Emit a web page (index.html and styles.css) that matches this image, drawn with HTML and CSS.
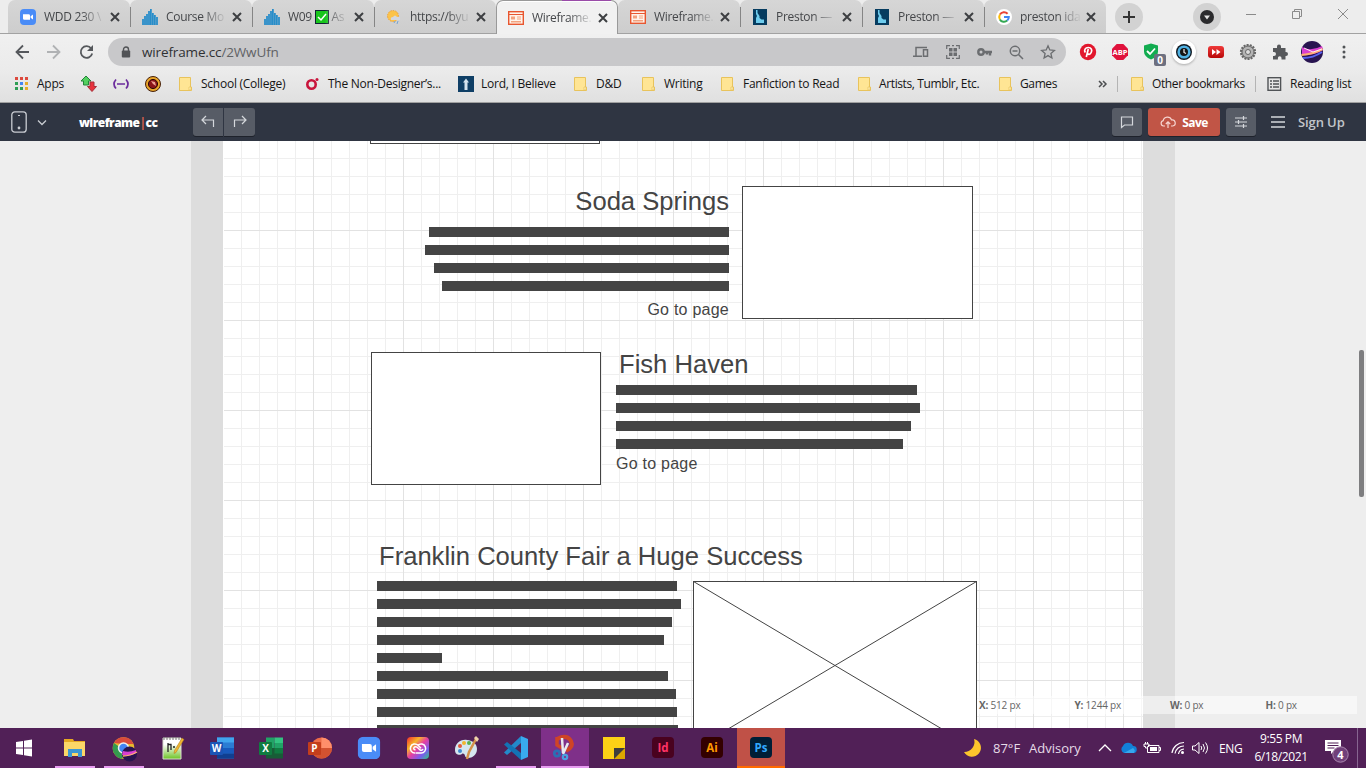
FILE: index.html
```html
<!DOCTYPE html>
<html lang="en">
<head>
<meta charset="utf-8">
<title>Wireframe</title>
<link rel="stylesheet" href="styles.css">
</head>
<body>
<svg class="defs" width="0" height="0">
  <defs>
    <linearGradient id="gfire" x1="0" y1="0" x2="1" y2="1"><stop offset="0" stop-color="#2a1a66"/><stop offset=".35" stop-color="#b03bd0"/><stop offset=".5" stop-color="#fff0d8"/><stop offset=".6" stop-color="#f0703a"/><stop offset=".75" stop-color="#5a2ab0"/><stop offset="1" stop-color="#140c3c"/></linearGradient>
    <linearGradient id="gcc" x1="0" y1="0" x2="1" y2="1"><stop offset="0" stop-color="#f22b2b"/><stop offset=".3" stop-color="#f5b52a"/><stop offset=".5" stop-color="#e83fa0"/><stop offset=".75" stop-color="#7a5af0"/><stop offset="1" stop-color="#2ad07a"/></linearGradient>
    <linearGradient id="gnp" x1="0" y1="0" x2="0" y2="1"><stop offset=".3" stop-color="#fff"/><stop offset="1" stop-color="#6cc424"/></linearGradient>
    <linearGradient id="gred" x1="0" y1="0" x2="0" y2="1"><stop offset="0" stop-color="#f03a3a"/><stop offset="1" stop-color="#b80808"/></linearGradient>
  </defs>
  <symbol id="x" viewBox="0 0 10 10"><path d="M1 1l8 8M9 1L1 9" stroke="currentColor" stroke-width="2" fill="none"/></symbol>
  <symbol id="zoom" viewBox="0 0 16 16"><rect width="16" height="16" rx="4" fill="#4a8cf7"/><path d="M3 5.200h5.600q1.400 0 1.400 1.400v4.200H4.400Q3 10.800 3 9.400zM10.600 7.200L13 5.400v5.200l-2.400-1.800z" fill="#fff"/></symbol>
  <symbol id="bars" viewBox="0 0 16 16"><path d="M1 16V10M3 16V7M5 16V5M7 16V2M8.900 16V0M10.900 16V4M12.900 16V6M15 16V8" stroke="#1585c8" stroke-width="1.600"/></symbol>
  <symbol id="wf" viewBox="0 0 16 14"><rect x=".7" y=".7" width="14.600" height="12.600" fill="#fff3ea" stroke="#e8562f" stroke-width="1.400"/><path d="M1 3.500h14" stroke="#e8562f"/><path d="M3 5.500h4v3H3zM3 10h10v1.500H3z" fill="#f3a27e"/><path d="M9 6h4M9 8h4" stroke="#f3a27e"/></symbol>
  <symbol id="idaho" viewBox="0 0 14 16"><rect width="14" height="16" fill="#063c60"/><path d="M3 1h1.500v3l2 3v2l2 1.500H11v3.500H3V9l1-2-1-2z" fill="#6fcdee"/></symbol>
  <symbol id="folder" viewBox="0 0 16 16"><path d="M1.500 1.500h11v9.500h1v3.500h-12z" fill="#ffe594" stroke="#e8c35c"/><path d="M11 14v-3h2v3z" fill="#fff0b8" stroke="#e8c35c" stroke-width=".7"/></symbol>
</svg>

<header class="tabs">
  <div class="tab"><svg class="fav"><use href="#zoom"/></svg><span class="title">WDD 230 \</span><svg class="close"><use href="#x"/></svg></div>
  <div class="tab sep"><svg class="fav"><use href="#bars"/></svg><span class="title">Course Mo</span><svg class="close"><use href="#x"/></svg></div>
  <div class="tab sep"><svg class="fav"><use href="#bars"/></svg><span class="title">W09 <svg class="check" viewBox="0 0 14 14"><rect x=".5" y=".5" width="13" height="13" fill="#18c51c" stroke="#123"/><path d="M3 7l3 3 5-6" fill="none" stroke="#fff" stroke-width="1.500"/></svg> As</span><svg class="close"><use href="#x"/></svg></div>
  <div class="tab sep"><svg class="fav" viewBox="0 0 16 16"><circle cx="7" cy="7" r="5.500" fill="#fcc34a" stroke="#eda23a" stroke-dasharray="1.500 1"/><path d="M5 11q-1-3 2-3 2-3 4 0 4-1 3 3z" fill="#d4d7df"/><path d="M9 12l-1 2M12 12l-1 3" stroke="#74a5d4"/></svg><span class="title">https://byu</span><svg class="close"><use href="#x"/></svg></div>
  <div class="tab active"><svg class="fav"><use href="#wf"/></svg><span class="title">Wireframe.</span><svg class="close"><use href="#x"/></svg></div>
  <div class="tab"><svg class="fav"><use href="#wf"/></svg><span class="title">Wireframe.</span><svg class="close"><use href="#x"/></svg></div>
  <div class="tab sep"><svg class="fav"><use href="#idaho"/></svg><span class="title">Preston —</span><svg class="close"><use href="#x"/></svg></div>
  <div class="tab sep"><svg class="fav"><use href="#idaho"/></svg><span class="title">Preston —</span><svg class="close"><use href="#x"/></svg></div>
  <div class="tab sep"><svg class="fav" viewBox="0 0 16 16"><circle cx="8" cy="8" r="8" fill="#fff"/><g fill="none" stroke-width="2"><path d="M11.600 4.700A4.800 4.800 0 0 0 3.900 5.600" stroke="#ea4335"/><path d="M3.900 5.600a4.800 4.800 0 0 0 0 4.800" stroke="#fbbc05"/><path d="M3.900 10.400a4.800 4.800 0 0 0 7.300 1.200" stroke="#34a853"/><path d="M11.200 11.600A4.800 4.800 0 0 0 12.800 8H8" stroke="#4285f4"/></g></svg><span class="title">preston ida</span><svg class="close"><use href="#x"/></svg></div>
  <div class="round plus"><svg width="12" height="12" viewBox="0 0 12 12"><path d="M6 0v12M0 6h12" stroke="#333" stroke-width="2"/></svg></div>
  <div class="round search"><svg width="14" height="14" viewBox="0 0 14 14"><circle cx="7" cy="7" r="7" fill="#2b2b2d"/><path d="M4 5.500h6L7 9.500z" fill="#e4e4e4"/></svg></div>
  <svg class="winctl" viewBox="0 0 104 12"><g fill="none" stroke="#8a8a8a"><path d="M0 6.500h10M46.500 3.500h7v7h-7zM48.500 3V1.500h7v7H54M92 1l10 10M102 1L92 11"/></g></svg>
</header>

<nav class="addressbar">
  <svg class="navs" viewBox="0 0 80 16"><g fill="none" stroke-width="1.800"><path d="M15 8H2.500M9 1.500L2.500 8 9 14.500" stroke="#55585c"/><path d="M33 8h12.500M39 1.500L45.500 8 39 14.500" stroke="#b0b2b4"/><path d="M77.200 4.500A5.800 5.800 0 1 0 78.200 9.500" stroke="#55585c"/></g><path d="M79 1v6h-6z" fill="#55585c"/></svg>
  <div class="url">
    <svg width="10" height="12" viewBox="0 0 10 12"><path d="M2.500 5V3.500a2.500 2.500 0 0 1 5 0V5" fill="none" stroke="#515356" stroke-width="1.400"/><rect x=".8" y="4.500" width="8.400" height="7" rx="1" fill="#515356"/></svg>
    <span class="host">wireframe.cc<i>/2WwUfn</i></span>
    <svg class="urlicons" viewBox="0 0 144 16"><g fill="none" stroke="#6b6d70" stroke-width="1.500"><path d="M14 3.500H3v8M0 12.300h9M10.500 5.700h4v6.600h-4z"/><path d="M33.700 5V1.700H37M43 1.700h3.300V5M46.300 11v3.300H43M37 14.300h-3.300V11M39 1.700h2M39 14.300h2" stroke-width="1.200"/><circle cx="68" cy="8" r="2.700" stroke-width="2.400"/><path d="M71 8h8M77 8v3.500M74 8v2.500" stroke-width="2.400"/><circle cx="102" cy="7" r="4.700"/><path d="M105.500 10.500L110 15M99.500 7h5"/><path d="M135 1.800l1.800 4.200 4.600.4-3.500 3.100 1 4.500-3.900-2.400-3.900 2.400 1-4.500-3.500-3.100 4.600-.4z" stroke-width="1.300"/></g><path d="M36 4h3.500v3.500H36zM40.500 4H44v3.500h-3.500zM36 8.500h3.500V12H36zM40.500 8.500H44V12h-3.500z" fill="#6b6d70"/></svg>
  </div>
  <div class="ext">
    <svg viewBox="0 0 24 24"><circle cx="12" cy="12" r="8.200" fill="#e2172d"/><path d="M10.300 17l2-8M9.300 12.500c-1.600-2.500 0-5 2.900-5 3.200 0 4.200 2.500 3 5s-3.500 2.200-3.800.7" stroke="#fff" stroke-width="1.700" fill="none"/></svg>
    <svg viewBox="0 0 24 24"><path d="M8.700 4h6.600L20 8.700v6.600L15.300 20H8.700L4 15.300V8.700z" fill="#e0123c"/><text x="12" y="15" class="abp">ABP</text></svg>
    <svg viewBox="0 0 24 24"><path d="M11 3.500l7 2v6q0 5-7 8-7-3-7-8v-6z" fill="#12ac50"/><path d="M7 11l3 3 5-5.500" stroke="#fff" stroke-width="1.800" fill="none"/><rect x="14" y="14" width="12" height="12" rx="2" fill="#6d7080"/><text x="20" y="24" class="zero">0</text></svg>
    <svg viewBox="0 0 24 24"><circle class="halo" cx="12" cy="12" r="12"/><circle cx="12" cy="12" r="8" fill="#121a22"/><circle cx="12" cy="12" r="5.300" fill="#151515" stroke="#50b2e4" stroke-width="2.600"/><path d="M12 9v3.500l2 1" stroke="#eee" fill="none" stroke-width="1.200"/></svg>
    <svg viewBox="0 0 24 24"><rect x="4" y="6" width="16" height="12" rx="3" fill="url(#gred)"/><path d="M8 9l4 3-4 3zM12.500 9l4 3-4 3z" fill="#fff"/></svg>
    <svg viewBox="0 0 24 24"><circle cx="12" cy="12" r="7" fill="#aaa" stroke="#666" stroke-width="2.200" stroke-dasharray="2 1.140"/><circle cx="12" cy="12" r="5.800" fill="#b4b4b4" stroke="#777"/><circle cx="12" cy="12" r="2.500" fill="#ddd" stroke="#666"/></svg>
    <svg viewBox="0 0 24 24"><path d="M5 8h4V6.500a2 2 0 0 1 4 0V8h4.500v4h.5a2 2 0 0 1 0 4h-.5v3.500h-4V18a1.800 1.800 0 0 0-3.600 0v1.500H5V16h1a1.900 1.900 0 0 0 0-4H5z" fill="#56585b"/></svg>
    <svg viewBox="0 0 24 24"><circle cx="12" cy="12" r="11" fill="#281450"/><path d="M2 7q9 5 20-1l1 4q-9 6-21 5z" fill="#d83fd0"/><path d="M1.500 15q12-1 21-6" stroke="#ffb070" stroke-width="2.200" fill="none"/><path d="M3 18q10 0 19-6" stroke="#5a62f0" stroke-width="2" fill="none"/><path d="M4 8l9 4 9-3" stroke="#ffe6f4" fill="none"/></svg>
    <svg viewBox="0 0 24 24"><g fill="#505356"><circle cx="12" cy="7" r="1.500"/><circle cx="12" cy="12" r="1.500"/><circle cx="12" cy="17" r="1.500"/></g></svg>
  </div>
</nav>

<nav class="bookmarks">
  <div class="bm"><svg viewBox="0 0 16 16"><g><path d="M1 1h3v3H1zM6 1h3v3H6zM11 1h3v3h-3z" fill="#dc4a3e"/><path d="M1 6h3v3H1zM1 11h3v3H1zM6 11h3v3H6z" fill="#2f9e54"/><path d="M6 6h3v3H6z" fill="#4285f4"/><path d="M11 6h3v3h-3zM11 11h3v3h-3z" fill="#e6ac2a"/></g></svg><span>Apps</span></div>
  <div class="bm"><svg viewBox="0 0 16 16"><path d="M5 0L0 5h2.500v4h5V5H10z" fill="#54d060" stroke="#24843a"/><path d="M11 15.500L6.500 10.500H9V6h4v4.500h2.500z" fill="#e8333c" stroke="#a6303a"/></svg></div>
  <div class="bm"><svg viewBox="0 0 16 16"><path d="M3 3.500Q-1 8 3 12.500M13 3.500Q17 8 13 12.500M4 8h8" stroke="#6b2b9c" stroke-width="1.700" fill="none"/></svg></div>
  <div class="bm"><svg viewBox="0 0 16 16"><circle cx="8" cy="8" r="7.500" fill="#e9a52a" stroke="#46200a"/><circle cx="8" cy="8" r="4.600" fill="#8a1418" stroke="#2a0a06"/><path d="M6 5l4 1 1 4-3-2z" fill="#f0a090"/></svg></div>
  <div class="bm"><svg><use href="#folder"/></svg><span>School (College)</span></div>
  <div class="bm"><svg viewBox="0 0 16 16"><circle cx="6.500" cy="8.500" r="4.200" fill="none" stroke="#c9153c" stroke-width="2.600"/><circle cx="12" cy="3.500" r="1.500" fill="#c9153c"/></svg><span>The Non-Designer’s...</span></div>
  <div class="bm"><svg viewBox="0 0 16 16"><rect width="16" height="16" fill="#0f3f66"/><path d="M8 2.500l3 4H9.500V14h-3V6.500H5z" fill="#d3e3ef"/></svg><span>Lord, I Believe</span></div>
  <div class="bm"><svg><use href="#folder"/></svg><span>D&amp;D</span></div>
  <div class="bm"><svg><use href="#folder"/></svg><span>Writing</span></div>
  <div class="bm"><svg><use href="#folder"/></svg><span>Fanfiction to Read</span></div>
  <div class="bm tight"><svg><use href="#folder"/></svg><span>Artists, Tumblr, Etc.</span></div>
  <div class="bm tight"><svg><use href="#folder"/></svg><span>Games</span></div>
  <div class="bm"><svg viewBox="0 0 16 16"><path d="M1 5l3 3-3 3M5 5l3 3-3 3" stroke="#4c4e50" stroke-width="1.500" fill="none"/></svg></div>
  <div class="vline"></div>
  <div class="bm tight"><svg><use href="#folder"/></svg><span>Other bookmarks</span></div>
  <div class="vline"></div>
  <div class="bm"><svg viewBox="0 0 16 16"><rect x="1" y="1.700" width="12.600" height="12.600" fill="none" stroke="#505356" stroke-width="1.400"/><path d="M3 5h2M3 8h2M3 11h2M6 5h6M6 8h6M6 11h6" stroke="#505356" stroke-width="1.500"/></svg><span>Reading list</span></div>
</nav>

<div class="appbar">
  <svg class="device" viewBox="0 0 36 22"><rect x=".8" y=".8" width="14.400" height="20.400" rx="3" fill="none" stroke="#c9ccd2" stroke-width="1.300"/><path d="M7 4.500h2" stroke="#c9ccd2"/><circle cx="8" cy="17" r="1.400" fill="#c9ccd2"/><path d="M27 9.500l4 4 4-4" fill="none" stroke="#c9ccd2" stroke-width="1.300"/></svg>
  <div class="brand">wireframe<b>|</b>cc</div>
  <div class="history">
    <button><svg viewBox="0 0 14 12"><path d="M5 0L1 4l4 4M1 4h11.500v7" /></svg></button>
    <button><svg viewBox="0 0 14 12"><path d="M9 0l4 4-4 4M13 4H1.500v7"/></svg></button>
  </div>
  <div class="actions">
    <button class="sq"><svg viewBox="0 0 14 12"><path d="M1.500 1h11v8h-8l-3 2.500z"/></svg></button>
    <button class="save"><svg viewBox="0 0 16 12"><path d="M5 10H3.500a2.700 2.700 0 0 1-.3-5.300 4.300 4.300 0 0 1 8.300-.8 3 3 0 0 1 1.200 6.100H11M8 12V6M5.800 8L8 5.800 10.200 8"/></svg>Save</button>
    <button class="sq"><svg viewBox="0 0 14 12"><path d="M1 2h12M1 6h12M1 10h12M9.500 0v4M4.500 4v4M9.500 8v4"/></svg></button>
    <svg class="burger" viewBox="0 0 14 12"><path d="M0 1h14M0 6h14M0 11h14"/></svg>
    <span class="signup">Sign Up</span>
  </div>
</div>

<main class="canvas">
  <div class="sheet">
    <div class="box box-top"></div>
    <h2 class="heading soda">Soda Springs</h2>
    <div class="lines lines-soda"><i></i><i></i><i></i><i></i></div>
    <p class="link soda-link">Go to page</p>
    <div class="box box-soda"></div>
    <div class="box box-fish"></div>
    <h2 class="heading fish">Fish Haven</h2>
    <div class="lines lines-fish"><i></i><i></i><i></i><i></i></div>
    <p class="link fish-link">Go to page</p>
    <h2 class="heading fair">Franklin County Fair a Huge Success</h2>
    <div class="lines lines-fair"><i></i><i></i><i></i><i></i><i></i><i></i><i></i><i></i><i></i></div>
    <svg class="image-box" viewBox="0 0 284 169"><rect x=".5" y=".5" width="283" height="168" fill="#fff" stroke="#444"/><path d="M.5.5l283 168M283.500.5L.5 168.500" stroke="#444"/></svg>
  </div>
  <div class="coords"><span><b>X:</b> 512 px</span><span><b>Y:</b> 1244 px</span><span><b>W:</b> 0 px</span><span><b>H:</b> 0 px</span></div>
  <div class="thumb"></div>
</main>

<footer class="taskbar">
  <div class="task start"><svg viewBox="0 0 24 24"><path d="M4 6l7-1v6.500H4zM12 4.800l8-1.200v7.900h-8zM4 12.500h7V19l-7-1zM12 12.500h8v7.900l-8-1.200z" fill="#fff"/></svg></div>
  <div class="task run"><svg viewBox="0 0 24 24"><path d="M1 3h9l1 2h11v15H1z" fill="#e6a922"/><path d="M1 6h21v14H1z" fill="#fbd668"/><path d="M5 13h14v8h-4v-4H9v4H5z" fill="#3c97d3"/></svg></div>
  <div class="task run"><svg viewBox="0 0 24 24"><circle cx="11.500" cy="12" r="10.800" fill="#e8b92e"/><path d="M2 7a10.800 10.800 0 0 1 19.500 1H11z" fill="#d94b3c"/><path d="M2 7a10.800 10.800 0 0 0 8 15.800L13 15z" fill="#349b4e"/><circle cx="11.500" cy="12" r="5" fill="#4285f4" stroke="#eee" stroke-width="1.500"/><circle cx="17.500" cy="18" r="7.500" fill="#281450"/><path d="M11 15q6 2 13-1v3q-6 4-14 2z" fill="#d83fd0"/><path d="M11 20q7 0 14-4" stroke="#ffb070" fill="none" stroke-width="1.400"/></svg></div>
  <div class="task"><svg viewBox="0 0 24 24"><path d="M2 2h18v21H2z" fill="url(#gnp)" stroke="#d9ddcf"/><path d="M3 1v3M6 1v3M9 1v3M12 1v3M15 1v3M18 1v3" stroke="#777"/><path d="M7 7v9M7 8.500h3V14M12 11h2M16 11h2" stroke="#222" fill="none" stroke-width="1.300"/><path d="M21 2l2 1.500-8 13-2 1 .5-3z" fill="#efb532" stroke="#a87818" stroke-width=".5"/></svg></div>
  <div class="task"><svg viewBox="0 0 24 24"><path d="M7 1.500h17v21H7z" fill="#2b7cd3"/><path d="M7 1.500h17v5H7z" fill="#41a5ee"/><path d="M7 12h17v5.500H7z" fill="#185abd"/><path d="M7 17.500h17v5H7z" fill="#103f91"/><rect y="6" width="13" height="13" rx="1" fill="#1b55b5"/><text x="6.500" y="16.200" class="ico">W</text></svg></div>
  <div class="task"><svg viewBox="0 0 24 24"><path d="M7 1.500h8.500V12H7z" fill="#21a366"/><path d="M15.500 1.500H24V7h-8.500z" fill="#33c481"/><path d="M15.500 7H24v5h-8.500z" fill="#21a366"/><path d="M7 12h17v10.500H7z" fill="#185c37"/><path d="M15.500 12H24v5.500h-8.500z" fill="#107c41"/><rect y="6" width="13" height="13" rx="1" fill="#107c41"/><text x="6.500" y="16.200" class="ico">X</text></svg></div>
  <div class="task"><svg viewBox="0 0 24 24"><circle cx="13.500" cy="12" r="10.500" fill="#ed6c47"/><path d="M13.500 1.500A10.500 10.500 0 0 1 24 12H13.500z" fill="#ff8f6b"/><path d="M3 12h21a10.500 10.500 0 0 1-21 0z" fill="#d35230"/><rect y="6" width="13" height="13" rx="1" fill="#c43e1c"/><text x="6.500" y="16.200" class="ico">P</text></svg></div>
  <div class="task"><svg viewBox="-.5 -.5 17 17"><use href="#zoom" width="16" height="16"/></svg></div>
  <div class="task"><svg viewBox="0 0 24 24"><rect x="1" y="1" width="22" height="22" rx="4" fill="url(#gcc)"/><path d="M9 17a4.500 4.500 0 1 1 3-7.700l3 3M15 17H9.500M15 17a4.500 4.500 0 1 0-3-7.700M9.500 14q-3-1-1-3 2-1 3.500 1l2 2q2 1 3-1" fill="none" stroke="#fff" stroke-width="1.500"/></svg></div>
  <div class="task"><svg viewBox="0 0 24 24"><path d="M12 4C5 3 0 8 0 14c0 6 6 5 7 4s3 0 3 2c1 4 12 2 12-7 0-5-4-8.500-10-9z" fill="#d5e6ef"/><circle cx="5" cy="10" r="2" fill="#e25a3c"/><circle cx="9" cy="7" r="2" fill="#f1b52c"/><circle cx="14" cy="7" r="2" fill="#58b050"/><circle cx="5" cy="15" r="2" fill="#3f8ad0"/><path d="M21 3l-7 13-2 7" stroke="#d4914a" stroke-width="2.500" fill="none"/><path d="M19 2l2-2 3 3-2 3z" fill="#f0d3aa"/></svg></div>
  <div class="task run"><svg viewBox="0 0 24 24"><path d="M17 0v7L3 19l-3-2.500z" fill="#2389ca"/><path d="M17 24v-7L3 6 0 8.500z" fill="#1373b5"/><path d="M17 0l7 3v18l-7 3z" fill="#39a9ef"/></svg></div>
  <div class="task snip run"><svg viewBox="0 0 24 24"><path d="M4 3q10-5 14 2 3 6-5 10" stroke="#cf4426" stroke-width="4" fill="none"/><path d="M4 1v8l5 3" stroke="#cf4426" stroke-width="3.500" fill="none"/><path d="M9 2l1 15M15 7l-5 11" stroke="#e9e9ef" stroke-width="2.500"/><circle cx="4" cy="17.500" r="2.700" fill="none" stroke="#2c6fb4" stroke-width="2.800"/><circle cx="12" cy="21" r="2.200" fill="none" stroke="#4aa0e0" stroke-width="2.200"/></svg></div>
  <div class="task"><svg viewBox="0 0 24 24"><path d="M1 1h22v22H1z" fill="#fcd116"/><path d="M12 12h11v11H12z" fill="#dba800"/><path d="M12 12h11L12 23z" fill="#3d3d3d"/></svg></div>
  <div class="task"><svg viewBox="0 0 24 24"><rect x="1" y="1" width="22" height="21" rx="4" fill="#49021f"/><text x="12" y="16" class="adobe id">Id</text></svg></div>
  <div class="task"><svg viewBox="0 0 24 24"><rect x="1" y="1" width="22" height="21" rx="4" fill="#330000"/><text x="12" y="16" class="adobe ai">Ai</text></svg></div>
  <div class="task photo run"><svg viewBox="0 0 24 24"><rect x="1" y="1" width="22" height="21" rx="4" fill="#001e36"/><text x="12" y="16" class="adobe ps">Ps</text></svg></div>
  <div class="tray">
    <svg viewBox="0 0 20 20"><path d="M11 1A9 9 0 1 1 1 14 10 10 0 0 0 11 1z" fill="#fcc52c"/></svg>
    <span class="weather">87°F</span><span class="weather">Advisory</span>
    <svg viewBox="0 0 20 20"><path d="M3 13l6-6 6 6" fill="none" stroke="#fff" stroke-width="1.300"/></svg>
    <svg viewBox="1 0 20 20"><path d="M4 15a4 4 0 0 1-1-7 5.500 5.500 0 0 1 10 0 3.500 3.500 0 0 1 .5 7z" fill="#1280d8"/><path d="M4 15l9-5a3.500 3.500 0 0 1 1 5z" fill="#36a7ee"/></svg>
    <svg viewBox="2 0 20 20"><path d="M5 7.500h11v7H4.500V10M16 9.500h1.500v3H16M1 6h5v2.500H4.500V10H2.500V8.500H1zM2.500 4v2M4.500 4v2" fill="none" stroke="#fff"/><path d="M7 9h7v4H7z" fill="#fff"/></svg>
    <svg viewBox="1 0 20 20"><path d="M2 15A12 12 0 0 1 14 4.500M5 15.500A9 9 0 0 1 14 8M8.500 16A6 6 0 0 1 14 11" fill="none" stroke="#fff" stroke-width="1.200"/><circle cx="12.500" cy="14.500" r="1.500" fill="#fff"/></svg>
    <svg viewBox="1 0 20 20"><path d="M1.500 8h2.500l4-3.500v11L4 12H1.500zM10 8q1.500 2 0 4M12 6q3 4 0 8M14.500 4.500q4 5.500 0 11" fill="none" stroke="#fff"/></svg>
    <span class="eng">ENG</span>
    <div class="clock"><span>9:55 PM</span><span>6/18/2021</span></div>
    <div class="note"><svg viewBox="0 0 24 24"><path d="M0 4h16v11H9l-3 3v-3H0z" fill="#fff"/><path d="M2.500 7h11M2.500 9.500h11M2.500 12h7" stroke="#512057"/><circle cx="15.500" cy="18.500" r="7.700" fill="#71407a" stroke="#a987ae"/><text x="15.500" y="22.500" class="four">4</text></svg></div>
  </div>
</footer>
</body>
</html>
```
FILE: styles.css
```css
* { box-sizing: border-box; }
body { margin: 0; width: 1366px; height: 768px; overflow: hidden; display: flex; flex-direction: column; font: 12px "Open Sans", "Noto Sans", sans-serif; color: #222; background: #eee; }
.defs { position: absolute; }
svg { flex: none; display: block; overflow: visible; }
button { border: 0; padding: 0; font: inherit; color: inherit; display: flex; align-items: center; justify-content: center; }

.tabs { height: 34px; flex: none; display: flex; padding-left: 8px; background: #ededed; border-bottom: 1px solid #a2a2a2; }
.tab { position: relative; width: 122px; height: 33px; flex: none; display: flex; align-items: center; padding-left: 12px; background: linear-gradient(#d6d6d6, #cdcdcd); border-radius: 7px 7px 0 0; color: #45474a; }
.tab.sep::before { content: ""; position: absolute; left: 0; top: 7px; width: 1px; height: 20px; background: #858585; }
.tab.active { height: 34px; background: #f1f1f1; border: 1px solid #999; border-bottom: 0; padding-left: 11px; box-shadow: inset 0 1px #fff; }
.tab.active::after { content: ""; position: absolute; left: 65px; top: -1px; width: 49px; height: 1px; background: #9a4ba8; }
.fav { width: 16px; height: 16px; }
.title { width: 61px; margin-left: 8px; white-space: nowrap; letter-spacing: -.3px; -webkit-mask-image: linear-gradient(90deg, #000 60%, rgba(0,0,0,.1) 96%); mask-image: linear-gradient(90deg, #000 60%, rgba(0,0,0,.1) 96%); }
.check { display: inline-block; width: 14px; height: 14px; vertical-align: -3px; }
.close { width: 10px; height: 10px; margin-left: 5px; color: #3d3f42; }
.round { width: 28px; height: 28px; margin-top: 3px; border-radius: 50%; background: #d2d2d2; display: flex; align-items: center; justify-content: center; }
.plus { margin-left: 9px; }
.search { margin-left: 50px; }
.winctl { width: 104px; height: 12px; margin: 8px 0 0 25px; }

.addressbar { height: 36px; flex: none; display: flex; align-items: center; background: linear-gradient(#f0f0f0, #ebebeb); }
.navs { width: 80px; height: 16px; margin-left: 14px; }
.url { width: 958px; height: 28px; margin-left: 14px; border-radius: 14px; background: #c8c8ca; display: flex; align-items: center; padding-left: 13px; }
.host { margin-left: 11px; font-size: 13.500px; letter-spacing: -.14px; color: #303134; flex: 1; }
.host i { font-style: normal; color: #606265; }
.urlicons { width: 144px; height: 16px; margin-right: 9px; }
.ext { display: flex; gap: 8px; margin-left: 10px; }
.ext svg { width: 24px; height: 24px; }
.abp { font: bold 7.500px "Open Sans", sans-serif; fill: #fff; text-anchor: middle; }
.zero { font: bold 10px "Open Sans", sans-serif; fill: #fff; text-anchor: middle; }
.halo { fill: #fff; filter: drop-shadow(0 1px 1px #aaa); }

.bookmarks { height: 33px; flex: none; padding: 0 0 5px 14px; display: grid; align-items: center; background: linear-gradient(#ebebeb, #e0e0e0); border-bottom: 1px solid #a0a0a0;
  grid-template-columns: 67px 32px 32px 33px 127px 153px 115px 68px 79px 137px 141px 100px 19px 13px 125px 12px 1fr; }
.bm { display: flex; align-items: center; gap: 7px; white-space: nowrap; letter-spacing: -.25px; color: #151515; }
.bm.tight { gap: 6px; letter-spacing: -.38px; }
.bm svg { width: 16px; height: 16px; }
.vline { width: 1px; height: 16px; background: #b4b4b4; }

.appbar { height: 38px; flex: none; display: flex; align-items: center; background: #2f3542; padding: 0 20px 0 11px; color: #fff; }
.device { width: 36px; height: 22px; }
.brand { margin-left: 32px; width: 82px; font-weight: 800; letter-spacing: -.55px; white-space: nowrap; }
.brand b { color: #d9604e; font-weight: 700; }
.history { display: flex; gap: 1px; margin-left: 32px; }
.history button, .sq { width: 31px; height: 28px; background: #575c66; border-radius: 3px; box-shadow: 0 1px #1e222b; }
.sq { width: 30px; }
.history button:first-child { width: 30px; border-radius: 3px 0 0 3px; }
.history button:last-child { border-radius: 0 3px 3px 0; }
.appbar button svg, .burger { width: 14px; height: 12px; fill: none; stroke: #d5d8dc; stroke-width: 1.200; }
.actions { margin-left: auto; display: flex; align-items: center; }
.save { width: 72px; height: 28px; margin: 0 6px 0 6px; gap: 6px; background: #c15546; border-radius: 3px; box-shadow: 0 1px #1e222b; font-weight: 700; letter-spacing: -.6px; }
.appbar .save svg { width: 16px; stroke: #f6d5d0; }
.burger { margin-left: 15px; stroke-width: 1.500; }
.signup { margin-left: 13px; font-size: 13px; font-weight: 600; color: #c2c5ca; letter-spacing: -.1px; width: 48px; white-space: nowrap; }

.canvas { position: relative; height: 587px; flex: none; overflow: hidden; padding-left: 191px; background: #eee; }
.sheet { position: relative; width: 984px; height: 587px; border: solid #ddd; border-width: 0 32px; box-shadow: inset 1px 0 #fff; background-color: #fff;
  background-image: linear-gradient(90deg, #e2e2e2 1px, transparent 1px), linear-gradient(#e2e2e2 1px, transparent 1px), linear-gradient(90deg, #efefef 1px, transparent 1px), linear-gradient(#efefef 1px, transparent 1px);
  background-size: 90px 90px, 90px 90px, 18px 18px, 18px 18px; background-position: 0 -1px; }
/* Wireframe items are placed freely on the sheet */
.box, .heading, .link, .lines, .image-box { position: absolute; margin: 0; }
.box { border: 1px solid #444; background: #fff; }
.box-top { left: 147px; top: -130px; width: 230px; height: 133px; }
.box-soda { left: 519px; top: 45px; width: 231px; height: 133px; }
.box-fish { left: 148px; top: 211px; width: 230px; height: 133px; }
.heading { font: 25.600px/30px "Liberation Sans", Arial, sans-serif; color: #444; white-space: nowrap; }
.link { font: 16px/18px "Liberation Sans", Arial, sans-serif; letter-spacing: .24px; color: #444; white-space: nowrap; }
.soda { right: 414px; top: 45px; }
.fish { left: 396px; top: 208px; }
.fair { left: 156px; top: 400px; }
.soda-link { right: 414px; top: 160px; }
.fish-link { left: 393px; top: 314px; }
.lines { display: flex; flex-direction: column; gap: 8px; }
.lines i { height: 10px; flex: none; background: #444; }
.lines-soda { right: 414px; top: 86px; align-items: flex-end; }
.lines-soda i:nth-child(1) { width: 300px; }
.lines-soda i:nth-child(2) { width: 304px; }
.lines-soda i:nth-child(3) { width: 295px; }
.lines-soda i:nth-child(4) { width: 287px; }
.lines-fish { left: 393px; top: 244px; }
.lines-fish i:nth-child(1) { width: 301px; }
.lines-fish i:nth-child(2) { width: 304px; }
.lines-fish i:nth-child(3) { width: 295px; }
.lines-fish i:nth-child(4) { width: 287px; }
.lines-fair { left: 154px; top: 440px; }
.lines-fair i:nth-child(1) { width: 300px; }
.lines-fair i:nth-child(2) { width: 304px; }
.lines-fair i:nth-child(3) { width: 295px; }
.lines-fair i:nth-child(4) { width: 287px; }
.lines-fair i:nth-child(5) { width: 65px; }
.lines-fair i:nth-child(6) { width: 291px; }
.lines-fair i:nth-child(7) { width: 299px; }
.lines-fair i:nth-child(8) { width: 300px; }
.lines-fair i:nth-child(9) { width: 301px; }
.image-box { left: 470px; top: 440px; width: 284px; height: 169px; }
.coords { position: absolute; left: 977px; top: 555px; width: 380px; height: 18px; padding-left: 2px; display: grid; grid-template-columns: repeat(4, 95.500px); align-items: center; background: rgba(255,255,255,.5); font-size: 10px; letter-spacing: -.2px; color: #666; white-space: nowrap; }
.thumb { position: absolute; left: 1359px; top: 209px; width: 5px; height: 147px; border-radius: 2px; background: #7e7e80; }

.taskbar { height: 40px; flex: none; display: flex; background: #512057; color: #fff; }
.task { width: 48px; height: 40px; margin-right: 1px; flex: none; display: flex; align-items: center; justify-content: center; position: relative; }
.task svg { width: 24px; height: 24px; }
.start { margin-right: 3px; }
.run::after { content: ""; position: absolute; left: 4px; right: 4px; bottom: 0; height: 2px; background: #e79cf0; }
.snip { background: #7f3089; }
.photo { background: #c05147; }
.snip::after, .photo::after { left: 0; right: 0; }
.photo::after { background: #ff6a00; }
.ico { font: bold 10px "Open Sans", sans-serif; fill: #fff; text-anchor: middle; }
.adobe { font: bold 11.500px "Open Sans", sans-serif; text-anchor: middle; }
.id { fill: #ff3366; }
.ai { fill: #ff9a00; }
.ps { fill: #31a8ff; }
.tray { flex: 1; display: grid; align-items: center; padding-left: 177px; white-space: nowrap;
  grid-template-columns: 30px 36px 67px 25px 24px 26px 21px 27px 29px 68px 44px; }
.tray > svg { width: 20px; height: 20px; }
.weather { font-size: 13px; color: #e6dce8; }
.eng { letter-spacing: -.3px; }
.clock { display: flex; flex-direction: column; align-items: center; line-height: 18px; letter-spacing: -.4px; padding-right: 2px; }
.note { width: 42px; height: 40px; padding: 8px 0 0 9px; border-right: 1px solid #876590; }
.note svg { width: 24px; height: 24px; }
.four { font: bold 11px "Open Sans", sans-serif; fill: #fff; text-anchor: middle; }
```
